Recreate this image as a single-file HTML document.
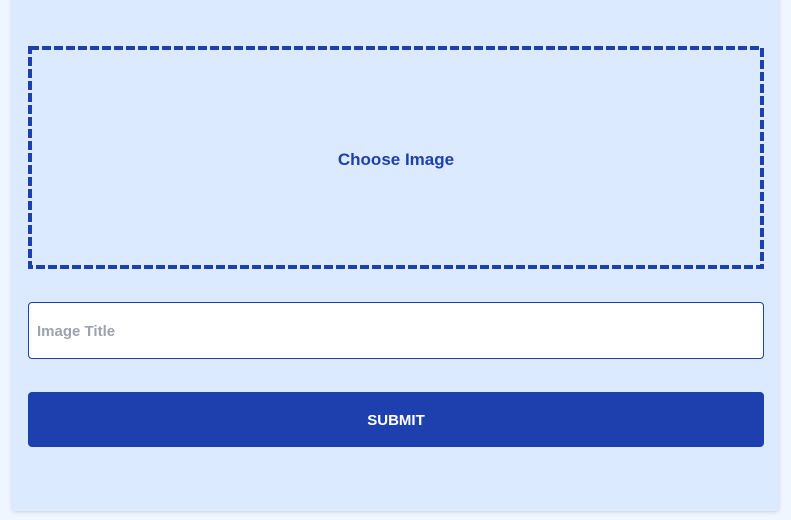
<!DOCTYPE html>
<html><head><style>
body{margin:0;background:#eff6ff;width:791px;height:520px;overflow:hidden;font-family:"Liberation Sans",sans-serif}
.card{position:absolute;left:12px;top:-8px;width:767px;height:519px;background:#dbeafe;border-radius:4px;box-shadow:0 1px 4px rgba(0,0,0,.15)}
svg{position:absolute;left:28px;top:46px}
.drop{position:absolute;left:28px;top:48px;width:736px;height:223px;display:flex;align-items:center;justify-content:center;color:#1e40af;font-weight:bold;font-size:17px}
.inp{position:absolute;left:28px;top:302px;width:736px;height:57px;box-sizing:border-box;border:1px solid #1e40af;border-radius:4px;background:#fff;color:#9ca3af;font-size:15px;font-weight:bold;padding-left:8px;line-height:57px}
.btn{position:absolute;left:28px;top:392px;width:736px;height:55px;background:#1e40af;border-radius:4px;color:#fff;font-weight:bold;font-size:15px;text-align:center;line-height:57px}
</style></head><body>
<div class="card"></div>
<svg width="736" height="223"><rect x="2" y="2" width="732" height="219" fill="none" stroke="#1e40af" stroke-width="4" stroke-dasharray="9 3"/></svg>
<div class="drop">Choose Image</div>
<div class="inp">Image Title</div>
<div class="btn">SUBMIT</div>
</body></html>
